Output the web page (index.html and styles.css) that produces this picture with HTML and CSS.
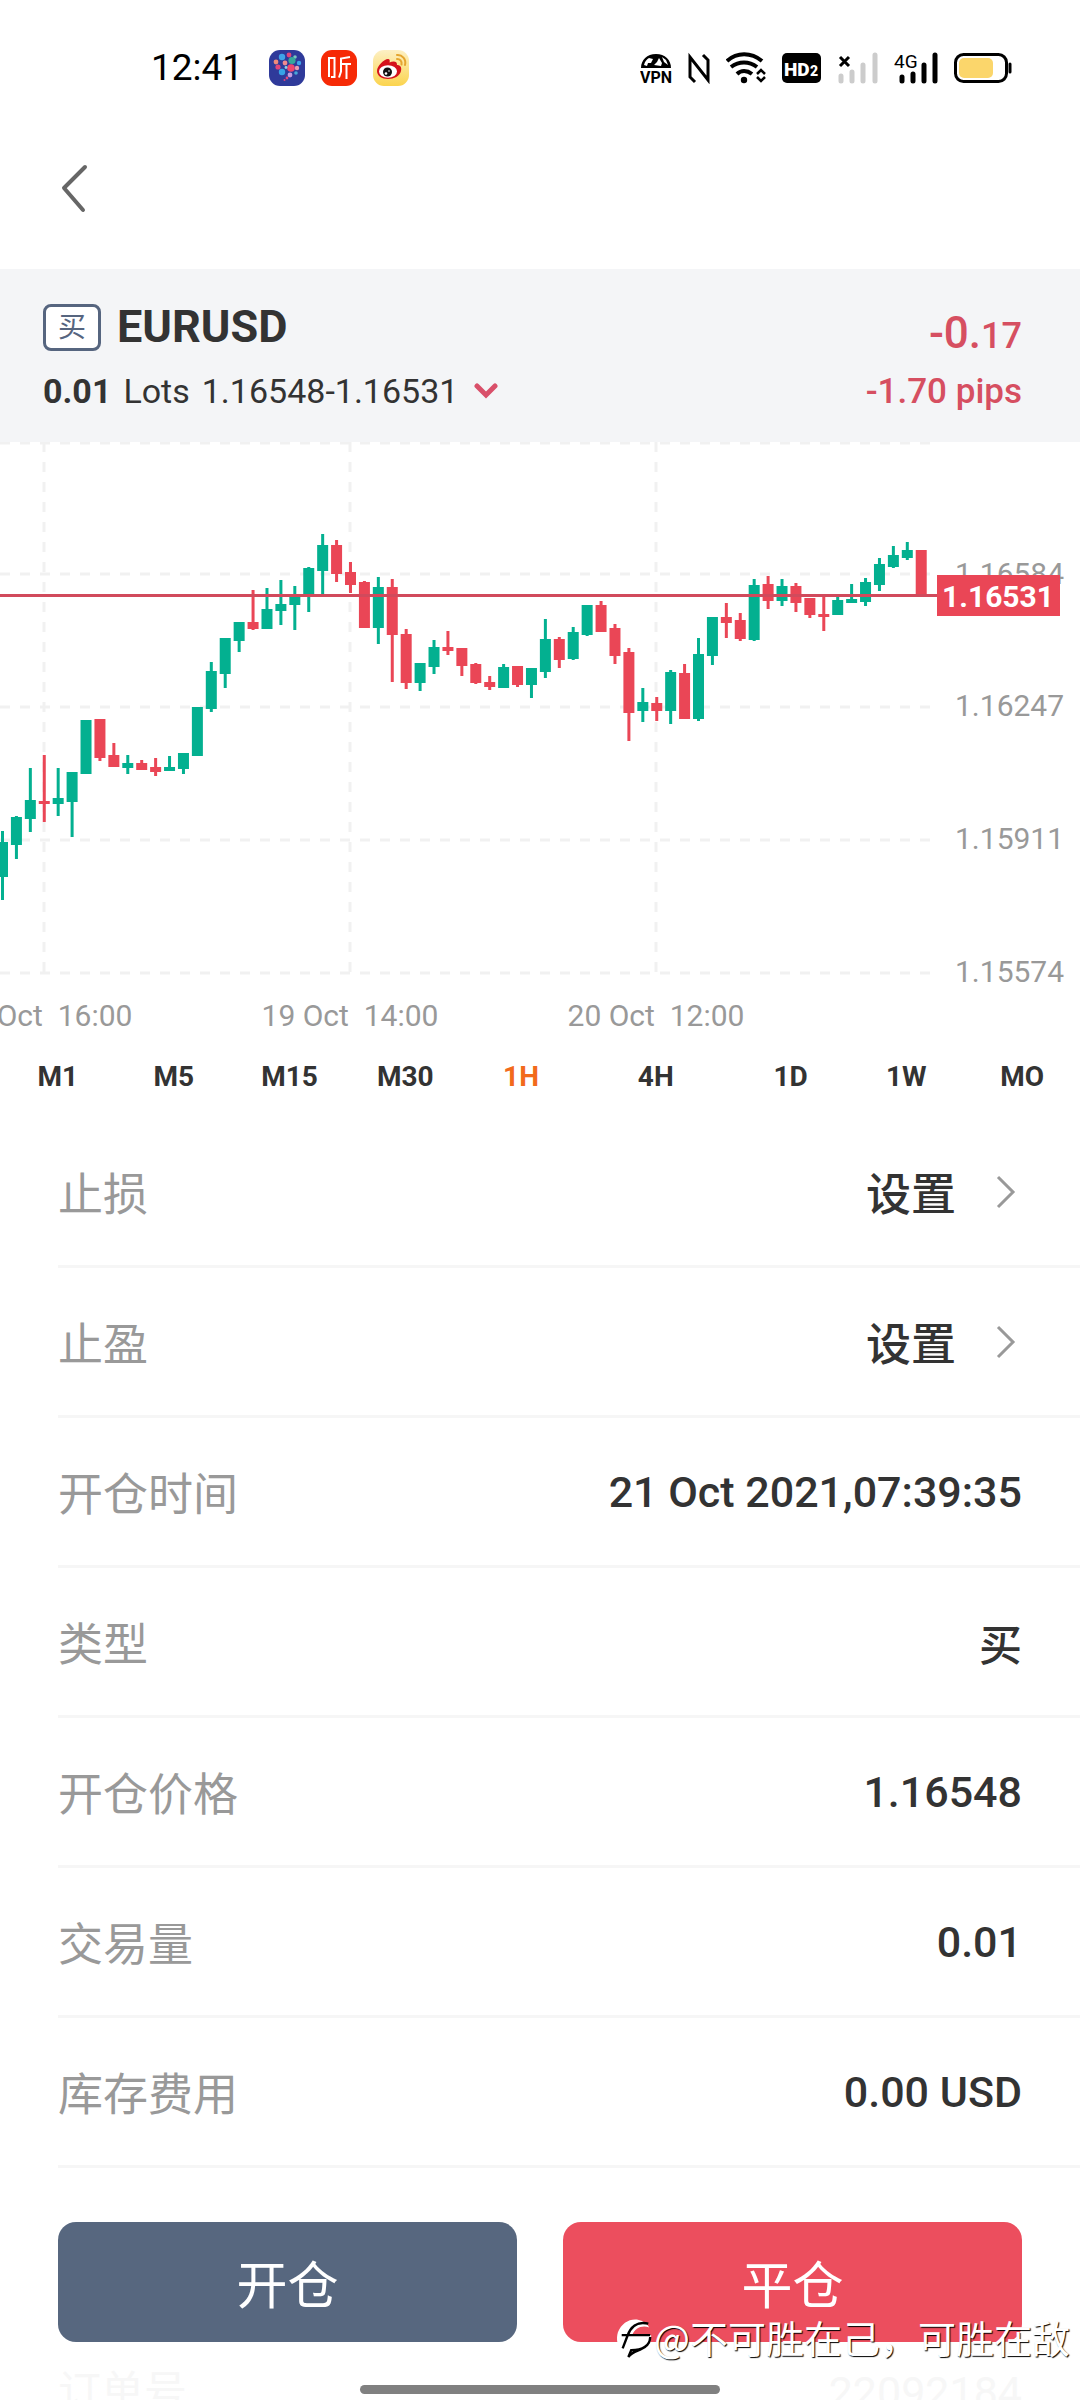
FILE: index.html
```html
<!DOCTYPE html>
<html lang="zh-CN">

<head>
  <meta charset="UTF-8">
  <meta name="viewport" content="width=device-width, initial-scale=1.0">
  <title>EURUSD</title>
  <link rel="stylesheet" href="styles.css">
  <script src="chart.js" defer></script>
</head>

<body>
  <div class="status-bar">
    <span class="time">12:41</span>
    <div class="app-icons">
      <svg width="36" height="36" viewBox="0 0 36 36">
        <rect width="36" height="36" rx="11" fill="#2f3a9a" />
        <circle cx="13" cy="7" r="3.2" fill="#3fa4e8" />
        <circle cx="20" cy="5" r="2.4" fill="#e0457b" />
        <circle cx="26" cy="7" r="1.8" fill="#7cc6c0" />
        <circle cx="7" cy="12" r="2.4" fill="#f08a7a" />
        <circle cx="16" cy="13" r="2.4" fill="#ef8a8f" />
        <circle cx="23" cy="10.500" r="3.6" fill="#36a79a" />
        <circle cx="30" cy="13" r="2.2" fill="#3fa4e8" />
        <circle cx="9" cy="17" r="2.6" fill="#e0457b" />
        <circle cx="13" cy="22" r="3.2" fill="#37a3e6" />
        <circle cx="22" cy="18" r="3.8" fill="#f0466e" />
        <circle cx="28" cy="18" r="2.2" fill="#e99ab0" />
        <circle cx="17" cy="17.500" r="1.400" fill="#8ad0e8" />
        <circle cx="27" cy="23" r="1.800" fill="#48a7d9" />
        <circle cx="21" cy="25" r="2.4" fill="#c59ae0" />
        <circle cx="18" cy="28" r="1.400" fill="#e0457b" />
        <circle cx="15.500" cy="30" r="1" fill="#e0457b" />
      </svg>
      <svg width="36" height="36" viewBox="0 0 36 36">
        <rect width="36" height="36" rx="11" fill="#f62a06" />
        <path d="M8 8h5.500v19H10M8 7v20M29 7l-9 1.500v13l-2 6M20 14h10M25.500 14v15" fill="none" stroke="#fff" stroke-width="2" />
      </svg>
      <svg width="36" height="36" viewBox="0 0 36 36">
        <defs>
          <linearGradient id="weibo" x1="0" y1="0" x2="0" y2="1">
            <stop offset="0" stop-color="#fdf0c4" />
            <stop offset="1" stop-color="#fbd44e" />
          </linearGradient>
        </defs>
        <rect width="36" height="36" rx="11" fill="url(#weibo)" />
        <path d="M4 21c0-5 7-12 11-12 2 0 2 2 1.500 3.500 3-1.500 8-2 7.500 2.500 3 0 5 2 4 6-1 5-7 8-13 8S4 26 4 21z" fill="#d5121b" />
        <ellipse cx="15" cy="21.500" rx="9" ry="6.200" fill="#fff" />
        <circle cx="14.500" cy="22" r="4.500" fill="#111" />
        <circle cx="13" cy="23.500" r="1.300" fill="#fff" />
        <circle cx="16" cy="21" r=".8" fill="#fff" />
        <path d="M24 9c3 0 5 2 4.500 5.500M24 5c5-.5 9.500 4 8 10" fill="none" stroke="#e5a52f" stroke-width="2" stroke-linecap="round" />
      </svg>
    </div>
    <div class="system-icons">
      <svg width="32" height="32" viewBox="0 0 32 32">
        <path d="M1 16C1 8 7 2 16 2s15 6 15 14z" />
        <path d="M4 13c1-4 3-6 5-7l4 1-2 4-3 0-1 3zM14 13l3-3 2-4 3 5-1 3zM22 5l4 3 2 5-4-3z" fill="#fff" />
        <text class="vpn" x="16" y="31" text-anchor="middle">VPN</text>
      </svg>
      <svg width="22" height="32" viewBox="0 0 22 32">
        <path d="M7 30L2 25V5l18 23V8l-5-5" fill="none" stroke="#000" stroke-width="3" />
      </svg>
      <svg width="40" height="32" viewBox="0 0 40 32">
        <g fill="none" stroke="#000" stroke-width="4">
          <path d="M1 9c10-9 24-9 35 0" />
          <path d="M5 15c8-6 18-6 26 0" />
          <path d="M11 22c4-4 10-4 15 0" />
          <path d="M31 22l4-4 4 4M31 25l4 4 4-4" stroke-width="2.500" />
        </g>
        <circle cx="18" cy="28" r="3.200" />
      </svg>
      <svg width="40" height="32" viewBox="0 0 40 32">
        <rect y="1" width="39" height="30" rx="5" />
        <text class="hd" x="2" y="24">HD</text>
        <text class="hd-small" x="28" y="24">2</text>
      </svg>
      <svg width="40" height="32" viewBox="0 0 40 32">
        <path d="M2 5l9 9M11 5l-9 9" stroke="#000" stroke-width="3" />
        <path d="M3 24v5M14 20v9M25 13v16M37 3v26" stroke="#ccc" stroke-width="5" stroke-linecap="round" />
      </svg>
      <svg width="44" height="32" viewBox="0 0 44 32">
        <text class="net" x="0" y="16">4G</text>
        <path d="M8 25v4M19 22v7M30 13v16M41 3v26" stroke="#000" stroke-width="5" stroke-linecap="round" />
      </svg>
      <svg width="58" height="32" viewBox="0 0 58 32">
        <rect x="1.500" y="2.500" width="51" height="27" rx="8" fill="#fff" stroke="#000" stroke-width="3" />
        <rect x="5" y="6" width="34" height="20" rx="5" fill="#fbd66b" />
        <path d="M56 12v8" stroke="#000" stroke-width="3" stroke-linecap="round" />
      </svg>
    </div>
  </div>

  <div class="nav">
    <button type="button" class="back" aria-label="返回">
      <svg width="30" height="50" viewBox="0 0 30 50">
        <path d="M26 4L5 25l19 22" fill="none" stroke="#666" stroke-width="4" stroke-linecap="round" stroke-linejoin="round" />
      </svg>
    </button>
  </div>

  <header class="summary">
    <div>
      <div class="symbol">
        <span class="badge">买</span>
        <h1>EURUSD</h1>
      </div>
      <div class="lots">
        <b>0.01</b>
        <span>Lots</span>
        <span class="range">1.16548-1.16531</span>
        <svg width="24" height="16" viewBox="0 0 24 16">
          <path d="M3 3l9 9 9-9" fill="none" stroke="#d9506a" stroke-width="5" stroke-linecap="round" />
        </svg>
      </div>
    </div>
    <div class="profit">
      <div class="amount">-0.<small>17</small></div>
      <div class="pips">-1.70 pips</div>
    </div>
  </header>

  <svg class="chart" id="chart" viewBox="0 0 1080 594">
    <g class="grid">
      <path d="M0 1H932M0 132H932M0 265H932M0 398H932M0 531H932" />
      <path d="M44 0V530M350 0V530M656 0V530" />
    </g>
    <g id="candles"></g>
    <g class="axis">
      <text x="955" y="142">1.16584</text>
      <text x="955" y="274">1.16247</text>
      <text x="955" y="407">1.15911</text>
      <text x="955" y="540">1.15574</text>
    </g>
    <g class="axis" text-anchor="middle">
      <text x="44" y="584">18 Oct&nbsp; 16:00</text>
      <text x="350" y="584">19 Oct&nbsp; 14:00</text>
      <text x="656" y="584">20 Oct&nbsp; 12:00</text>
    </g>
    <path d="M0 153.500H937" stroke="#d14a5c" stroke-width="3" />
    <rect x="937" y="133" width="123" height="41" fill="#ea4656" />
    <text class="price" x="998" y="165" text-anchor="middle">1.16531</text>
  </svg>

  <div class="periods">
    <button type="button">M1</button>
    <button type="button">M5</button>
    <button type="button">M15</button>
    <button type="button">M30</button>
    <button type="button" class="active">1H</button>
    <button type="button">4H</button>
    <button type="button">1D</button>
    <button type="button">1W</button>
    <button type="button">MO</button>
  </div>

  <ul class="details">
    <li>
      <span class="label" id="stop-loss">止损</span>
      <button type="button" class="action" aria-describedby="stop-loss">设置
        <svg width="26" height="34" viewBox="0 0 26 34">
          <path d="M2 2l15 15L2 32" fill="none" stroke="#999" stroke-width="3" />
        </svg>
      </button>
    </li>
    <li>
      <span class="label" id="take-profit">止盈</span>
      <button type="button" class="action" aria-describedby="take-profit">设置
        <svg width="26" height="34" viewBox="0 0 26 34">
          <path d="M2 2l15 15L2 32" fill="none" stroke="#999" stroke-width="3" />
        </svg>
      </button>
    </li>
    <li><span class="label">开仓时间</span><span class="value">21 Oct 2021,07:39:35</span></li>
    <li><span class="label">类型</span><span class="value">买</span></li>
    <li><span class="label">开仓价格</span><span class="value">1.16548</span></li>
    <li><span class="label">交易量</span><span class="value">0.01</span></li>
    <li><span class="label">库存费用</span><span class="value">0.00 USD</span></li>
  </ul>

  <footer>
    <div class="buttons">
      <button type="button" class="open">开仓</button>
      <button type="button" class="close">平仓</button>
    </div>
    <div class="next-row">
      <span>订单号</span>
      <span>22092184</span>
    </div>
    <div class="watermark">
      <svg width="38" height="44" viewBox="0 0 40 44">
        <path d="M7 37C1 32 0 24 2 17 6 7 15 2 24 4c5 1 9 4 11 8-8-3-15 1-18 8h20c1 10-8 17-20 21 2-5 3-8 4-10" fill="#fff" />
        <path d="M34 8C22 5 15 12 12 21L7 34M6 20h30M36 22c0 9-8 14-20 14l-3 7c4-5 9-6 13-8 6-2 10-7 10-13z" fill="none" stroke="#000" stroke-width="2.500" />
      </svg>
      <span>@不可胜在己，可胜在敌</span>
    </div>
    <div class="home-bar"></div>
  </footer>
</body>

</html>
```
FILE: styles.css
```css
* {
  box-sizing: border-box;
}

body {
  margin: 0;
  background-color: #fff;
  color: #333;
  font-family: Roboto, "Noto Sans CJK SC", sans-serif;
  overflow-x: hidden;
}

button {
  border: none;
  padding: 0;
  background: none;
  color: inherit;
  font-family: inherit;
  cursor: pointer;
}

svg {
  display: block;
  flex: none;
}

.status-bar {
  display: flex;
  align-items: center;
  height: 136px;
  padding: 0 68px 0 151px;
}

.time {
  color: #000;
  font-size: 37px;
  line-height: 40px;
}

.app-icons {
  display: flex;
  gap: 16px;
  margin-left: 26px;
}

.system-icons {
  display: flex;
  gap: 16px;
  margin-left: auto;
}

.vpn {
  font-size: 16px;
  font-weight: 700;
}

.hd {
  fill: #fff;
  font-size: 19px;
  font-weight: 900;
}

.hd-small {
  fill: #fff;
  font-size: 14px;
  font-weight: 900;
}

.net {
  font-size: 19px;
}

.nav {
  display: flex;
  align-items: center;
  height: 133px;
  padding: 0 59px 29px;
}

.summary {
  display: flex;
  justify-content: space-between;
  height: 173px;
  padding: 30px 58px 0 43px;
  background-color: #f4f5f7;
}

.symbol {
  display: flex;
  align-items: center;
  gap: 16px;
  height: 56px;
}

.badge {
  width: 58px;
  height: 47px;
  border: 3px solid #56657f;
  border-radius: 8px;
  background-color: #fff;
  color: #56657f;
  font-size: 28px;
  line-height: 41px;
  text-align: center;
}

h1 {
  margin: 0;
  font-size: 45px;
  font-weight: 700;
  line-height: 56px;
}

.lots {
  display: flex;
  align-items: center;
  gap: 12px;
  height: 72px;
  font-size: 34px;
}

.range {
  margin-right: 4px;
}

.profit {
  padding-top: 6px;
  color: #d64f61;
  font-weight: 500;
  text-align: right;
}

.amount {
  font-size: 44px;
  line-height: 56px;
}

.amount small {
  font-size: 36px;
}

.pips {
  font-size: 35px;
  line-height: 56px;
}

.chart {
  width: 100%;
  height: auto;
}

.grid {
  fill: none;
  stroke: #f1f1f1;
  stroke-width: 3;
  stroke-dasharray: 10 10;
}

.axis {
  fill: #999;
  font-size: 30px;
}

.price {
  fill: #fff;
  font-size: 30px;
  font-weight: 700;
}

.up {
  fill: #03b090;
}

.down {
  fill: #ea4656;
}

.periods {
  display: grid;
  grid-template-columns: repeat(5, 116fr) 154fr repeat(3, 116fr);
  height: 80px;
}

.periods button {
  font-size: 28px;
  font-weight: 700;
}

.periods .active {
  color: #f26a1b;
}

.details {
  margin: 0;
  padding: 2px 0 0 58px;
  list-style: none;
}

.details li {
  display: flex;
  align-items: center;
  justify-content: space-between;
  height: 150px;
  padding-right: 58px;
  border-bottom: 3px solid #f6f6f6;
}

.label {
  color: #999;
  font-size: 45px;
}

.value {
  font-size: 43px;
  font-weight: 500;
}

.action {
  display: flex;
  align-items: center;
  gap: 40px;
  font-size: 45px;
  font-weight: 500;
}

footer {
  position: relative;
  padding-top: 54px;
}

.buttons {
  display: grid;
  grid-template-columns: 1fr 1fr;
  gap: 46px;
  padding: 0 58px;
}

.buttons button {
  height: 120px;
  border-radius: 18px;
  color: #fff;
  font-size: 51px;
}

.open {
  background-color: #57677f;
}

.close {
  background-color: #ec4e5e;
}

/* next list row, faded out under the buttons */
.next-row {
  display: flex;
  justify-content: space-between;
  height: 58px;
  padding: 0 58px;
  overflow: hidden;
  color: #f7f7f7;
  font-size: 43px;
  line-height: 100px;
}

.watermark {
  position: absolute;
  right: 10px;
  bottom: 35px;
  display: flex;
  align-items: center;
  color: #fff;
  font-size: 38px;
  line-height: 56px;
  text-shadow: 1px 1px 1px #000;
  white-space: nowrap;
}

.watermark span {
  font-family: "Noto Sans CJK SC", sans-serif;
}

.home-bar {
  position: absolute;
  bottom: 6px;
  left: 50%;
  width: 360px;
  height: 9px;
  margin-left: -180px;
  border-radius: 5px;
  background-color: #808080;
}
```
FILE: chart.js
```js
// [direction, high, body top, body bottom, low]
const candles = [
  ['up', 389, 400, 435, 458],
  ['up', 374, 375, 403, 417],
  ['up', 326, 358, 377, 390],
  ['down', 313, 359, 362, 380],
  ['up', 326, 356, 362, 374],
  ['up', 330, 330, 360, 395],
  ['up', 278, 278, 332, 332],
  ['down', 277, 277, 316, 319],
  ['down', 301, 313, 325, 325],
  ['up', 313, 321, 326, 332],
  ['down', 318, 321, 328, 328],
  ['down', 316, 325, 330, 334],
  ['up', 314, 325, 329, 329],
  ['up', 311, 311, 327, 332],
  ['up', 265, 265, 314, 314],
  ['up', 220, 229, 267, 270],
  ['up', 196, 196, 232, 246],
  ['up', 180, 180, 199, 210],
  ['down', 148, 180, 187, 188],
  ['up', 146, 167, 187, 187],
  ['up', 138, 162, 169, 183],
  ['up', 144, 154, 163, 188],
  ['up', 125, 126, 153, 170],
  ['up', 92, 103, 129, 153],
  ['down', 98, 103, 132, 140],
  ['down', 120, 130, 143, 151],
  ['down', 139, 140, 186, 186],
  ['up', 135, 145, 186, 202],
  ['down', 137, 145, 193, 240],
  ['down', 187, 192, 241, 247],
  ['up', 221, 221, 241, 249],
  ['up', 198, 205, 225, 232],
  ['down', 189, 205, 209, 213],
  ['down', 206, 206, 224, 234],
  ['down', 221, 222, 241, 242],
  ['down', 234, 240, 245, 248],
  ['up', 222, 225, 246, 246],
  ['down', 224, 224, 243, 245],
  ['up', 226, 226, 243, 256],
  ['up', 177, 197, 230, 236],
  ['down', 195, 197, 218, 226],
  ['up', 185, 190, 217, 218],
  ['up', 163, 163, 193, 194],
  ['down', 159, 163, 190, 190],
  ['down', 182, 186, 214, 222],
  ['down', 206, 210, 271, 299],
  ['up', 246, 260, 269, 280],
  ['down', 255, 261, 269, 279],
  ['up', 228, 230, 269, 282],
  ['down', 222, 231, 277, 277],
  ['up', 196, 212, 277, 279],
  ['up', 175, 175, 214, 223],
  ['down', 161, 175, 181, 196],
  ['down', 171, 178, 197, 199],
  ['up', 137, 143, 198, 199],
  ['down', 134, 142, 159, 167],
  ['up', 137, 144, 159, 164],
  ['down', 141, 144, 161, 170],
  ['down', 156, 156, 173, 176],
  ['down', 154, 172, 175, 189],
  ['up', 155, 158, 173, 173],
  ['up', 142, 157, 161, 161],
  ['up', 136, 140, 160, 164],
  ['up', 116, 122, 143, 149],
  ['up', 104, 113, 125, 126],
  ['up', 100, 108, 116, 118],
  ['down', 108, 108, 155, 155]
];

const firstX = 2.5;
const step = 13.92;
const group = document.getElementById('candles');

function addRect(cls, x, y, width, height) {
  const rect = document.createElementNS('http://www.w3.org/2000/svg', 'rect');
  rect.setAttribute('class', cls);
  rect.setAttribute('x', x);
  rect.setAttribute('y', y);
  rect.setAttribute('width', width);
  rect.setAttribute('height', height);
  group.appendChild(rect);
}

candles.forEach(function (c, i) {
  const x = firstX + i * step;
  addRect(c[0], x - 1.5, c[1], 3, c[4] - c[1]);
  addRect(c[0], x - 5.5, c[2], 11, c[3] - c[2]);
});
```
